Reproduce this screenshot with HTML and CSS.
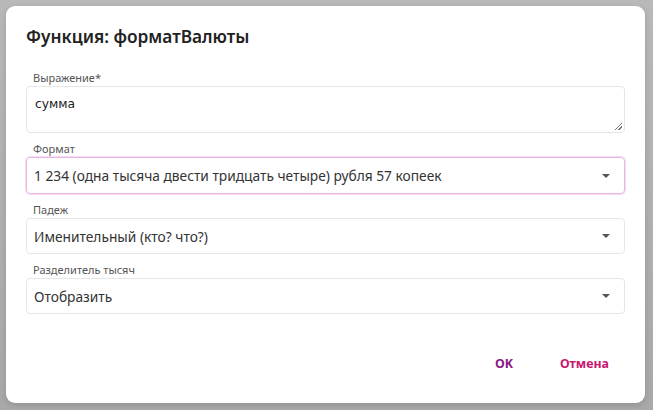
FILE: index.html
```html
<!DOCTYPE html>
<html lang="ru">
<head>
<meta charset="utf-8">
<link rel="stylesheet" href="styles.css">
</head>
<body>
<div class="backdrop">
  <div class="dialog">
    <h1 class="title">Функция: форматВалюты</h1>
    <div class="fields">
      <div class="field">
        <label class="label">Выражение*</label>
        <div class="textarea">сумма<span class="grip"></span></div>
      </div>
      <div class="field">
        <label class="label">Формат</label>
        <div class="select focused"><span class="value">1 234 (одна тысяча двести тридцать четыре) рубля 57 копеек</span><span class="caret"></span></div>
      </div>
      <div class="field">
        <label class="label">Падеж</label>
        <div class="select"><span class="value">Именительный (кто? что?)</span><span class="caret"></span></div>
      </div>
      <div class="field">
        <label class="label">Разделитель тысяч</label>
        <div class="select"><span class="value">Отобразить</span><span class="caret"></span></div>
      </div>
    </div>
    <div class="actions">
      <button class="btn ok">OK</button>
      <button class="btn cancel">Отмена</button>
    </div>
  </div>
</div>
</body>
</html>
```
FILE: styles.css
```css
html, body { margin: 0; padding: 0; }
body {
  width: 653px; height: 410px; overflow: hidden;
  font-family: "Noto Sans", "Open Sans", sans-serif;
  color: #333;
}
.backdrop {
  width: 653px; height: 410px; box-sizing: border-box;
  background: linear-gradient(180deg, #b9b9b9 0%, #a9a9a9 100%);
  padding: 6px 8px 7px 6px;
}
.dialog {
  background: #fff;
  border-radius: 9px;
  height: 100%;
  box-sizing: border-box;
  padding: 20px 20px 0 20px;
  display: flex; flex-direction: column;
  box-shadow: 0 2px 6px rgba(0,0,0,0.15);
}
.title {
  margin: 0;
  font-size: 17.3px; font-weight: 600; color: #222;
  line-height: 22px;
}
.fields { margin-top: 23px; display: flex; flex-direction: column; gap: 9px; }
.field { display: flex; flex-direction: column; }
.label {
  font-size: 11px; color: #555; line-height: 14px;
  padding-left: 7px; margin-bottom: 1px;
}
.textarea {
  position: relative;
  border: 1px solid #e6e6e6; border-radius: 4px;
  height: 47px; box-sizing: border-box;
  padding: 7px 8px;
  font-family: "DejaVu Sans", sans-serif; font-size: 12.3px; color: #222;
  line-height: 20px;
}
.grip {
  position: absolute; right: 2px; bottom: 2px; width: 7px; height: 7px;
  background: linear-gradient(135deg, transparent 45%, #777 45%, #777 55%, transparent 55%, transparent 70%, #777 70%, #777 80%, transparent 80%);
}
.select {
  display: flex; align-items: center; justify-content: space-between;
  border: 1px solid #e6e6e6; border-radius: 4px;
  height: 36px; box-sizing: border-box;
  padding: 0 14px 0 7px;
  font-size: 13.75px; color: #333;
}
.select.focused {
  height: 37px;
  border: 1px solid #e8b6df;
  box-shadow: 0 0 0 1px #f5def1;
}
.caret {
  width: 0; height: 0;
  border-left: 4px solid transparent; border-right: 4px solid transparent;
  border-top: 4px solid #555;
}
.actions {
  margin-top: auto; margin-bottom: 31px;
  display: flex; justify-content: flex-end; gap: 47px; padding-right: 16px;
}
.btn {
  background: none; border: 0; padding: 0; cursor: pointer;
  font-family: "Noto Sans", sans-serif; font-size: 12.4px; font-weight: 700;
}
.ok { color: #8a1a86; }
.cancel { color: #c8176e; }
```
